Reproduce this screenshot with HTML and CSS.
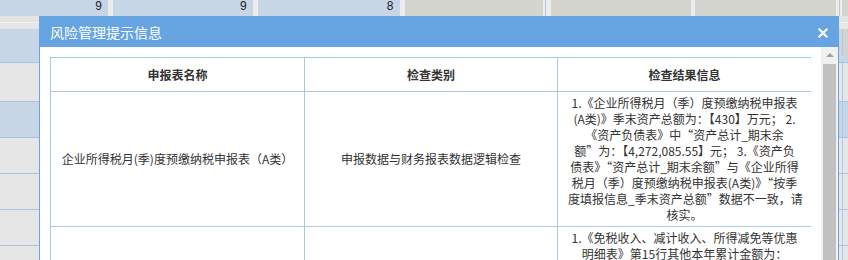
FILE: index.html
```html
<!DOCTYPE html>
<html lang="zh-CN">
<head>
<meta charset="utf-8">
<title>风险管理提示信息</title>
<link rel="stylesheet" href="styles.css">
</head>
<body>
<div class="page">
  <div class="bg">
    <div class="bg-top">
      <div class="tcell blue w108">9</div>
      <div class="tcell blue w140">9</div>
      <div class="tcell blue w142">8</div>
      <div class="tcell gray w139 g8"></div>
      <div class="tcell gray w140 g4"></div>
      <div class="tcell gray w141 g6"></div>
      <div class="tcell gray rest"></div>
    </div>
    <div class="bg-band"></div>
    <div class="bg-row blue h33"><div class="side dark"></div></div>
    <div class="bg-row gray h38"><div class="side"></div></div>
    <div class="bg-row blue h35"><div class="side"></div></div>
    <div class="bg-row gray h35"><div class="side"></div></div>
    <div class="bg-row gray h35"><div class="side"></div></div>
    <div class="bg-row gray h35"><div class="side"></div></div>
    <div class="bg-row gray h35"><div class="side"></div></div>
  </div>

  <div class="dialog">
    <div class="dlg-title">
      <span class="dlg-title-text">风险管理提示信息</span>
      <svg class="dlg-close" width="10" height="10" viewBox="0 0 10 10" aria-label="关闭">
        <path d="M1.2 1.2 L8.8 8.8 M8.8 1.2 L1.2 8.8" stroke="#ffffff" stroke-width="2" stroke-linecap="round" fill="none"/>
      </svg>
    </div>
    <div class="dlg-body">
      <div class="dlg-content">
        <table class="risk-table">
          <colgroup>
            <col class="c1"><col class="c2"><col class="c3">
          </colgroup>
          <thead>
            <tr>
              <th>申报表名称</th>
              <th>检查类别</th>
              <th>检查结果信息</th>
            </tr>
          </thead>
          <tbody>
            <tr>
              <td>企业所得税月(季)度预缴纳税申报表（A类）</td>
              <td>申报数据与财务报表数据逻辑检查</td>
              <td class="msg">1.《企业所得税月（季）度预缴纳税申报表<br>(A类)》季末资产总额为：【430】万元； 2.<br>《资产负债表》中“资产总计_期末余<br>额”为：【4,272,085.55】元； 3.《资产负<br>债表》“资产总计_期末余额”与《企业所得<br>税月（季）度预缴纳税申报表(A类)》“按季<br>度填报信息_季末资产总额”数据不一致，请<br>核实。</td>
            </tr>
            <tr>
              <td></td>
              <td></td>
              <td class="msg">1.《免税收入、减计收入、所得减免等优惠<br>明细表》第15行其他本年累计金额为：</td>
            </tr>
          </tbody>
        </table>
      </div>
      <div class="scrollbar">
        <div class="sb-btn"><span class="sb-arrow"></span></div>
        <div class="sb-thumb"></div>
      </div>
    </div>
  </div>
</div>
</body>
</html>
```

FILE: styles.css
```css
html, body {
  margin: 0;
  padding: 0;
}
body {
  width: 848px;
  height: 260px;
  overflow: hidden;
  font-family: "Noto Sans CJK SC", "Noto Sans", sans-serif;
  color: #333;
}
.page {
  position: relative;
  width: 848px;
  height: 260px;
  overflow: hidden;
  background: #e6e6e6;
}

/* ---------- background grid ---------- */
.bg {
  display: flex;
  flex-direction: column;
}
.bg-top {
  display: flex;
  height: 16px;
  background: #ececec;
}
.tcell {
  height: 16px;
  box-sizing: border-box;
  padding-right: 6px;
  text-align: right;
  font-family: "Liberation Sans", Arial, sans-serif;
  font-size: 12px;
  line-height: 12px;
  color: #222;
}
.tcell.blue { background: #c6d6e6; margin-right: 5px; }
.tcell.gray { background: #d4d4cf; }
.w108 { width: 108px; }
.w140 { width: 140px; }
.w142 { width: 142px; }
.w139 { width: 139px; }
.w141 { width: 141px; }
.g8 { margin-right: 8px; box-shadow: 2px 0 0 #ececec, 3px 0 0 #b8c8da; }
.g4 { margin-right: 4px; }
.g6 { margin-right: 6px; box-shadow: 3px 0 0 #ececec, 4px 0 0 #b8c8da; }
.rest { flex: 1; }

.bg-band {
  height: 13px;
  background: #e6e6e6;
  box-sizing: border-box;
  border-top: 6px solid #e4e4e4;
  box-shadow: inset 0 1px 0 #f2f2f2;
}
.bg-row {
  display: flex;
  justify-content: flex-end;
  box-sizing: border-box;
  border-bottom: 1px solid #a9c3df;
}
.bg-row.blue { background: #c6d6e6; }
.bg-row.gray { background: #e6e6e6; }
.h33 { height: 34px; }
.h38 { height: 39px; }
.h35 { height: 36px; }
.side {
  width: 5px;
  border-left: 1px solid #b8c8da;
  margin-left: 3px;
}
.side.dark {
  background: #d4d4cf;
  margin: 0 0 6px 3px;
  border-radius: 2px 0 0 2px;
}

/* ---------- dialog ---------- */
.dialog {
  position: absolute;
  left: 39px;
  top: 16px;
  width: 800px;
  height: 260px;
  box-sizing: border-box;
  border-left: 1px solid #66a5e1;
  border-right: 1px solid #66a5e1;
  background: #fff;
  display: flex;
  flex-direction: column;
}
.dlg-title {
  height: 31px;
  flex: none;
  background: #66a5e1;
  display: flex;
  align-items: center;
  justify-content: space-between;
  padding: 1px 10px 0 10px;
  box-sizing: border-box;
}
.dlg-title-text {
  color: #fff;
  font-size: 14px;
  line-height: 16px;
}
.dlg-close {
  display: block;
  margin-top: 1px;
}
.dlg-body {
  flex: 1;
  display: flex;
  min-height: 0;
}
.dlg-content {
  flex: 1;
  padding: 10px 0 0 10px;
  overflow: hidden;
}

/* ---------- table ---------- */
.risk-table {
  border-collapse: collapse;
  table-layout: fixed;
  width: 761px;
  font-size: 12px;
}
.risk-table col.c1 { width: 254px; }
.risk-table col.c2 { width: 253px; }
.risk-table col.c3 { width: 254px; }
.risk-table th,
.risk-table td {
  border: 1px solid #a9c8e9;
  text-align: center;
  vertical-align: middle;
}
.risk-table th {
  height: 34px;
  padding: 0;
  font-weight: bold;
  line-height: 16px;
  color: #333;
  box-sizing: border-box;
}
.risk-table td {
  padding: 3px 10px;
  line-height: 16px;
  color: #333;
}
.risk-table td.msg {
  white-space: nowrap;
}

/* ---------- scrollbar ---------- */
.scrollbar {
  width: 17px;
  flex: none;
  margin-left: 10px;
  background: #f1f1f1;
  display: flex;
  flex-direction: column;
}
.sb-btn {
  height: 17px;
  display: flex;
  align-items: center;
  justify-content: center;
}
.sb-arrow {
  width: 0;
  height: 0;
  border-left: 4px solid transparent;
  border-right: 4px solid transparent;
  border-bottom: 4px solid #a3a3a3;
  margin-top: -1px;
}
.sb-thumb {
  flex: 1;
  margin: 0 2px 0 2px;
  background: #c1c1c1;
}
```
